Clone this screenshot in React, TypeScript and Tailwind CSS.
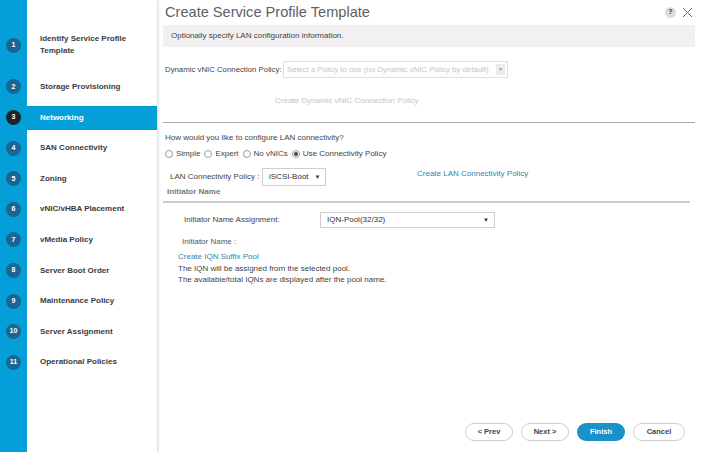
const steps = [
  'Identify Service Profile Template',
  'Storage Provisioning',
  'Networking',
  'SAN Connectivity',
  'Zoning',
  'vNIC/vHBA Placement',
  'vMedia Policy',
  'Server Boot Order',
  'Maintenance Policy',
  'Server Assignment',
  'Operational Policies',
];

function Radio({ label, checked = false }: { label: string; checked?: boolean }) {
  return (
    <label className="flex items-center gap-[3px]">
      <span className="w-[8px] h-[8px] rounded-full border border-[#9a9a9a] bg-white flex items-center justify-center">
        {checked && <span className="w-[4px] h-[4px] rounded-full bg-[#444]" />}
      </span>
      <span>{label}</span>
    </label>
  );
}

function StepRow({ label, index }: { label: string; index: number }) {
  const active = index === 2;
  const first = index === 0;
  return (
    <div className={`flex items-stretch ${first ? 'h-[30px]' : 'h-[30.6px]'}`}>
      <div className="w-[27px] bg-[#049fd9] flex items-center justify-center">
        <span
          className={`w-[15px] h-[15px] rounded-full flex items-center justify-center text-[7px] font-bold text-white ${
            active ? 'bg-[#1f2226]' : 'bg-[#1b6593]'
          }`}
        >
          {index + 1}
        </span>
      </div>
      <div className="flex-1 flex items-center">
        <div
          className={`w-full flex items-center pl-[13px] text-[8px] font-bold leading-[12px] ${
            active ? 'h-[24px] bg-[#049fd9] text-white' : 'text-[#3b3b3e]'
          }`}
        >
          {first ? (
            <span>
              Identify Service Profile
              <br />
              Template
            </span>
          ) : (
            label
          )}
        </div>
      </div>
    </div>
  );
}

function Sidebar() {
  return (
    <div className="w-[158px] flex flex-col bg-white border-r border-[#e2e2e2] shadow-[1px_0_2px_rgba(0,0,0,0.08)]">
      <div className="h-[30px] flex">
        <div className="w-[27px] bg-[#049fd9]" />
      </div>
      <StepRow label={steps[0]} index={0} />
      <div className="h-[11.7px] flex">
        <div className="w-[27px] bg-[#049fd9]" />
      </div>
      {steps.slice(1).map((s, i) => (
        <StepRow key={s} label={s} index={i + 1} />
      ))}
      <div className="flex-1 flex">
        <div className="w-[27px] bg-[#049fd9]" />
      </div>
    </div>
  );
}

export default function App() {
  return (
    <div
      className="w-[701px] h-[452px] flex bg-white overflow-hidden text-[#58585b] whitespace-nowrap"
      style={{ fontFamily: '"Liberation Sans", Arial, sans-serif' }}
    >
      <Sidebar />
      <div className="flex-1 flex flex-col pl-[5px] pr-[6px]">
        <div className="h-[25px] flex items-center justify-between">
          <h1 className="text-[14.6px] font-light text-[#606063] pl-[2px]">Create Service Profile Template</h1>
          <div className="flex items-center gap-[6px] pr-[2px]">
            <span className="w-[11px] h-[11px] rounded-full bg-[#dcdcdc] flex items-center justify-center text-[7px] font-bold text-[#333]">
              ?
            </span>
            <svg width="11" height="11" viewBox="0 0 11 11" stroke="#666" strokeWidth="1">
              <path d="M1 1L10 10M10 1L1 10" />
            </svg>
          </div>
        </div>
        <div className="h-[22px] bg-[#f2f0f0] flex items-center pl-[8px] text-[8px] text-[#444]">
          Optionally specify LAN configuration information.
        </div>

        <div className="mt-[14px] h-[17px] flex items-center text-[8px] text-[#444]">
          <span className="pl-[2px] w-[120px] shrink-0 text-[7.8px]">Dynamic vNIC Connection Policy:</span>
          <div className="w-[225px] h-[17px] shrink-0 border border-[#e0e0e0] flex items-center justify-between pl-[3px] pr-[2px] text-[#c4c4c4] text-[7.8px]">
            <span>Select a Policy to use (no Dynamic vNIC Policy by default)</span>
            <span className="w-[9px] h-[11px] bg-[#ececec] flex items-center justify-center text-[5px] text-[#999]">▼</span>
          </div>
        </div>

        <div className="mt-[17px] h-[12px] flex items-center pl-[112px] text-[8px] text-[#c4c4c4]">
          Create Dynamic vNIC Connection Policy
        </div>

        <div className="mt-[15px] border-t border-[#a9a9a9]" />

        <div className="mt-[9px] text-[8px] text-[#444] pl-[2px] leading-[12px]">
          How would you like to configure LAN connectivity?
        </div>
        <div className="mt-[4px] h-[12px] flex items-center gap-[4px] text-[8px] text-[#444] pl-[2px]">
          <Radio label="Simple" />
          <Radio label="Expert" />
          <Radio label="No vNICs" />
          <Radio label="Use Connectivity Policy" checked />
        </div>

        <div className="mt-[8px] flex items-center text-[8px] text-[#444]">
          <span className="pl-[7px] w-[99px] shrink-0">LAN Connectivity Policy :</span>
          <div className="w-[64px] h-[18px] shrink-0 border border-[#cfcfcf] flex items-center pl-[6px] gap-[6px] text-[#333]">
            <span>iSCSI-Boot</span>
            <span className="text-[6px]">▼</span>
          </div>
          <span className="ml-[91px] -mt-[7px] text-[#2f86ae]">Create LAN Connectivity Policy</span>
        </div>

        <div className="mt-[0px] pl-[4px] text-[8px] font-bold text-[#777] leading-[12px]">Initiator Name</div>
        <div className="mt-[3px] mr-[5px] border-t-2 border-[#cbcbcb]" />

        <div className="mt-[9px] flex items-center text-[8px] text-[#444]">
          <span className="pl-[21px] w-[157px] shrink-0">Initiator Name Assignment:</span>
          <div className="w-[175px] h-[16px] shrink-0 border border-[#cfcfcf] flex items-center justify-between pl-[6px] pr-[5px] text-[#333]">
            <span>IQN-Pool(32/32)</span>
            <span className="text-[6px]">▼</span>
          </div>
        </div>

        <div className="mt-[8px] pl-[19px] text-[8px] text-[#555] leading-[12px]">Initiator Name :</div>
        <div className="mt-[3px] pl-[15px] text-[8px] text-[#2f86ae] leading-[12px]">Create IQN Suffix Pool</div>
        <div className="pl-[15px] text-[8px] text-[#444] leading-[11px]">
          The IQN will be assigned from the selected pool.
          <br />
          The available/total IQNs are displayed after the pool name.
        </div>

        <div className="flex-1" />
        <div className="flex justify-end gap-[8px] pr-[10px] pb-[11px] text-[7.5px] font-bold">
          <button className="w-[48px] h-[18px] rounded-full border border-[#cfcfcf] bg-white text-[#444]">&lt; Prev</button>
          <button className="w-[48px] h-[18px] rounded-full border border-[#cfcfcf] bg-white text-[#444]">Next &gt;</button>
          <button className="w-[48px] h-[18px] rounded-full bg-[#1a91c8] text-white">Finish</button>
          <button className="w-[52px] h-[18px] rounded-full border border-[#cfcfcf] bg-white text-[#444]">Cancel</button>
        </div>
      </div>
    </div>
  );
}
